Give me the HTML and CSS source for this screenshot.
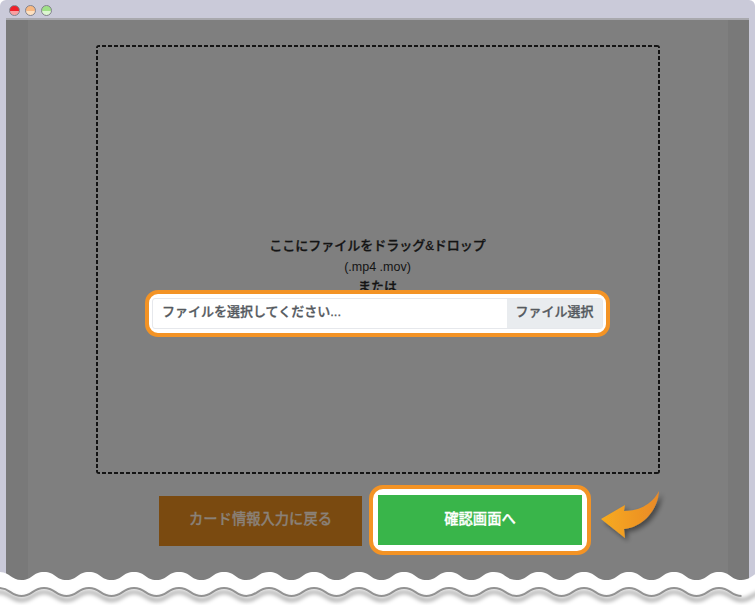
FILE: index.html
```html
<!DOCTYPE html>
<html lang="ja">
<head>
<meta charset="utf-8">
<title>ファイル選択</title>
<link rel="stylesheet" href="styles.css">
</head>
<body>
<div class="window">
  <div class="titlebar">
    <span class="light light-red"></span>
    <span class="light light-orange"></span>
    <span class="light light-green"></span>
  </div>
  <div class="content">
    <div class="page">
      <div class="dropzone">
        <p class="drop-title">ここにファイルをドラッグ&amp;ドロップ</p>
        <p class="drop-line">(.mp4 .mov)</p>
        <p class="drop-line drop-or">または</p>
        <div class="file-ring">
          <div class="file-group">
            <span class="file-placeholder">ファイルを選択してください...</span>
            <span class="file-button">ファイル選択</span>
          </div>
        </div>
      </div>
      <div class="actions">
        <a class="btn-back">カード情報入力に戻る</a>
        <div class="next-ring">
          <a class="btn-next">確認画面へ</a>
          <svg class="arrow" width="70" height="60" viewBox="0 0 70 60" aria-hidden="true">
            <defs>
              <linearGradient id="arrowFill" x1="0" x2="1" y1="0" y2="0">
                <stop offset="0" stop-color="#f7ab1e"/>
                <stop offset="1" stop-color="#ea8a27"/>
              </linearGradient>
              <filter id="arrowShadow" x="-20%" y="-20%" width="150%" height="150%">
                <feDropShadow dx="3" dy="3" stdDeviation="2.5" flood-color="#000" flood-opacity="0.45"/>
              </filter>
            </defs>
            <path d="M2 30 L26 16 L25 22 C38 22 52 17 60 2 C59 20 45 38 25 40 L26 49 Z" fill="url(#arrowFill)" filter="url(#arrowShadow)"/>
          </svg>
        </div>
      </div>
    </div>
  </div>
</div>
<svg class="tear" width="755" height="45" viewBox="0 560 755 45" aria-hidden="true">
  <defs>
    <filter id="tearShadow" x="-5%" y="-50%" width="110%" height="250%">
      <feGaussianBlur stdDeviation="2"/>
    </filter>
  </defs>
  <path fill="#fff" d="M-23.5 580 c11 0 11 -8 22.5 -8 s11.5 8 22.5 8 s11 -8 22.5 -8 s11.5 8 22.5 8 s11 -8 22.5 -8 s11.5 8 22.5 8 s11 -8 22.5 -8 s11.5 8 22.5 8 s11 -8 22.5 -8 s11.5 8 22.5 8 s11 -8 22.5 -8 s11.5 8 22.5 8 s11 -8 22.5 -8 s11.5 8 22.5 8 s11 -8 22.5 -8 s11.5 8 22.5 8 s11 -8 22.5 -8 s11.5 8 22.5 8 s11 -8 22.5 -8 s11.5 8 22.5 8 s11 -8 22.5 -8 s11.5 8 22.5 8 s11 -8 22.5 -8 s11.5 8 22.5 8 s11 -8 22.5 -8 s11.5 8 22.5 8 s11 -8 22.5 -8 s11.5 8 22.5 8 s11 -8 22.5 -8 s11.5 8 22.5 8 s11 -8 22.5 -8 s11.5 8 22.5 8 s11 -8 22.5 -8 s11.5 8 22.5 8 s11 -8 22.5 -8 s11.5 8 22.5 8 s11 -8 22.5 -8 s11.5 8 22.5 8 s11 -8 22.5 -8 s11.5 8 22.5 8 s11 -8 22.5 -8 s11.5 8 22.5 8 V605 H-23.5 Z"/>
  <g fill="none">
    <path transform="translate(0 4)" stroke="#000" stroke-opacity="0.4" stroke-width="3" filter="url(#tearShadow)" d="M-23.5 596 c11 0 11 -8 22.5 -8 s11.5 8 22.5 8 s11 -8 22.5 -8 s11.5 8 22.5 8 s11 -8 22.5 -8 s11.5 8 22.5 8 s11 -8 22.5 -8 s11.5 8 22.5 8 s11 -8 22.5 -8 s11.5 8 22.5 8 s11 -8 22.5 -8 s11.5 8 22.5 8 s11 -8 22.5 -8 s11.5 8 22.5 8 s11 -8 22.5 -8 s11.5 8 22.5 8 s11 -8 22.5 -8 s11.5 8 22.5 8 s11 -8 22.5 -8 s11.5 8 22.5 8 s11 -8 22.5 -8 s11.5 8 22.5 8 s11 -8 22.5 -8 s11.5 8 22.5 8 s11 -8 22.5 -8 s11.5 8 22.5 8 s11 -8 22.5 -8 s11.5 8 22.5 8 s11 -8 22.5 -8 s11.5 8 22.5 8 s11 -8 22.5 -8 s11.5 8 22.5 8 s11 -8 22.5 -8 s11.5 8 22.5 8 s11 -8 22.5 -8 s11.5 8 22.5 8"/>
    <path stroke="#929292" stroke-width="2" d="M-23.5 596 c11 0 11 -8 22.5 -8 s11.5 8 22.5 8 s11 -8 22.5 -8 s11.5 8 22.5 8 s11 -8 22.5 -8 s11.5 8 22.5 8 s11 -8 22.5 -8 s11.5 8 22.5 8 s11 -8 22.5 -8 s11.5 8 22.5 8 s11 -8 22.5 -8 s11.5 8 22.5 8 s11 -8 22.5 -8 s11.5 8 22.5 8 s11 -8 22.5 -8 s11.5 8 22.5 8 s11 -8 22.5 -8 s11.5 8 22.5 8 s11 -8 22.5 -8 s11.5 8 22.5 8 s11 -8 22.5 -8 s11.5 8 22.5 8 s11 -8 22.5 -8 s11.5 8 22.5 8 s11 -8 22.5 -8 s11.5 8 22.5 8 s11 -8 22.5 -8 s11.5 8 22.5 8 s11 -8 22.5 -8 s11.5 8 22.5 8 s11 -8 22.5 -8 s11.5 8 22.5 8 s11 -8 22.5 -8 s11.5 8 22.5 8"/>
  </g>
</svg>
</body>
</html>
```
FILE: styles.css
```css
html, body {
  margin: 0;
  padding: 0;
  background: #fff;
  width: 755px;
  height: 605px;
  overflow: hidden;
  font-family: "Liberation Sans", "Noto Sans CJK JP", sans-serif;
}
body {
  position: relative;
}
p {
  margin: 0;
}
.window {
  box-sizing: border-box;
  height: 585px;
  padding: 0 6px;
  background: #cacad9;
  border-radius: 6px 6px 0 0;
  display: flex;
  flex-direction: column;
}
.titlebar {
  height: 18px;
  flex: none;
  display: flex;
  align-items: center;
  gap: 5px;
  padding: 2px 0 0 3px;
  box-sizing: border-box;
}
.light {
  box-sizing: border-box;
  width: 11px;
  height: 11px;
  border-radius: 50%;
  border: 1.5px solid #83838c;
  display: block;
}
.light-red {
  background: linear-gradient(#f0202a 0 55%, #f9a0a0 55% 100%);
}
.light-orange {
  background: linear-gradient(#f7b883 0 55%, #fde0c0 55% 100%);
}
.light-green {
  background: linear-gradient(#a0e088 0 55%, #dcf6d0 55% 100%);
}
.content {
  flex: 1;
  background: #797979;
  border-top: 2px solid #a9a9ae;
  display: flex;
  justify-content: center;
}
.page {
  width: 700px;
  background: #7f7f7f;
  box-sizing: border-box;
  padding-top: 25px;
}
.dropzone {
  box-sizing: border-box;
  width: 564px;
  height: 429px;
  margin: 0 auto;
  padding: 191px 2px 2px;
  background-image:
    repeating-linear-gradient(90deg, #141414 0 4px, transparent 4px 6px),
    repeating-linear-gradient(90deg, #141414 0 4px, transparent 4px 6px),
    repeating-linear-gradient(0deg, #141414 0 4px, transparent 4px 6px),
    repeating-linear-gradient(0deg, #141414 0 4px, transparent 4px 6px);
  background-size: 100% 2px, 100% 2px, 2px 100%, 2px 100%;
  background-position: 0 0, 0 100%, 0 0, 100% 0;
  background-repeat: no-repeat;
  border-radius: 3px;
  display: flex;
  flex-direction: column;
  align-items: center;
  color: #141414;
  text-align: center;
}
.drop-title {
  font-size: 13px;
  font-weight: 500;
  -webkit-text-stroke: 0.3px currentColor;
  line-height: 20px;
  margin-bottom: 1px;
}
.drop-line {
  font-size: 12.5px;
  line-height: 20px;
}
.drop-or {
  font-size: 13px;
  font-weight: 500;
  -webkit-text-stroke: 0.3px currentColor;
}
.file-ring {
  box-sizing: border-box;
  width: 465px;
  height: 47px;
  margin-top: -7px;
  padding: 4px 3px;
  background: #fff;
  border: 4px solid #f39325;
  border-radius: 13px;
  position: relative;
}
.file-group {
  height: 31px;
  box-sizing: border-box;
  display: flex;
  border: 1px solid #e6e8ec;
  border-radius: 3px;
  font-size: 13px;
  font-weight: 500;
  -webkit-text-stroke: 0.3px currentColor;
  color: #555a60;
  line-height: 26px;
}
.file-placeholder {
  flex: 1;
  text-align: left;
  padding-left: 9px;
}
.file-button {
  width: 95px;
  background: #e9ecef;
  text-align: center;
}
.actions {
  display: flex;
  justify-content: center;
  align-items: center;
  gap: 7px;
  margin-top: 11px;
  padding-right: 5px;
}
.btn-back {
  width: 203px;
  height: 50px;
  margin-top: 2px;
  background: #7a4a10;
  color: #8a8178;
  font-size: 14.3px;
  font-weight: 500;
  -webkit-text-stroke: 0.3px currentColor;
  text-align: center;
  line-height: 47px;
}
.next-ring {
  position: relative;
  box-sizing: border-box;
  width: 222px;
  height: 70px;
  padding: 6px 5px;
  background: #fff;
  border: 4px solid #f39325;
  border-radius: 14px;
}
.btn-next {
  display: block;
  height: 50px;
  background: #39b54a;
  color: #fff;
  font-size: 14.3px;
  font-weight: 500;
  -webkit-text-stroke: 0.3px currentColor;
  text-align: center;
  line-height: 48px;
}
.arrow {
  position: absolute;
  left: 226px;
  top: 0;
}
.tear {
  position: absolute;
  left: 0;
  top: 560px;
  display: block;
}
```
